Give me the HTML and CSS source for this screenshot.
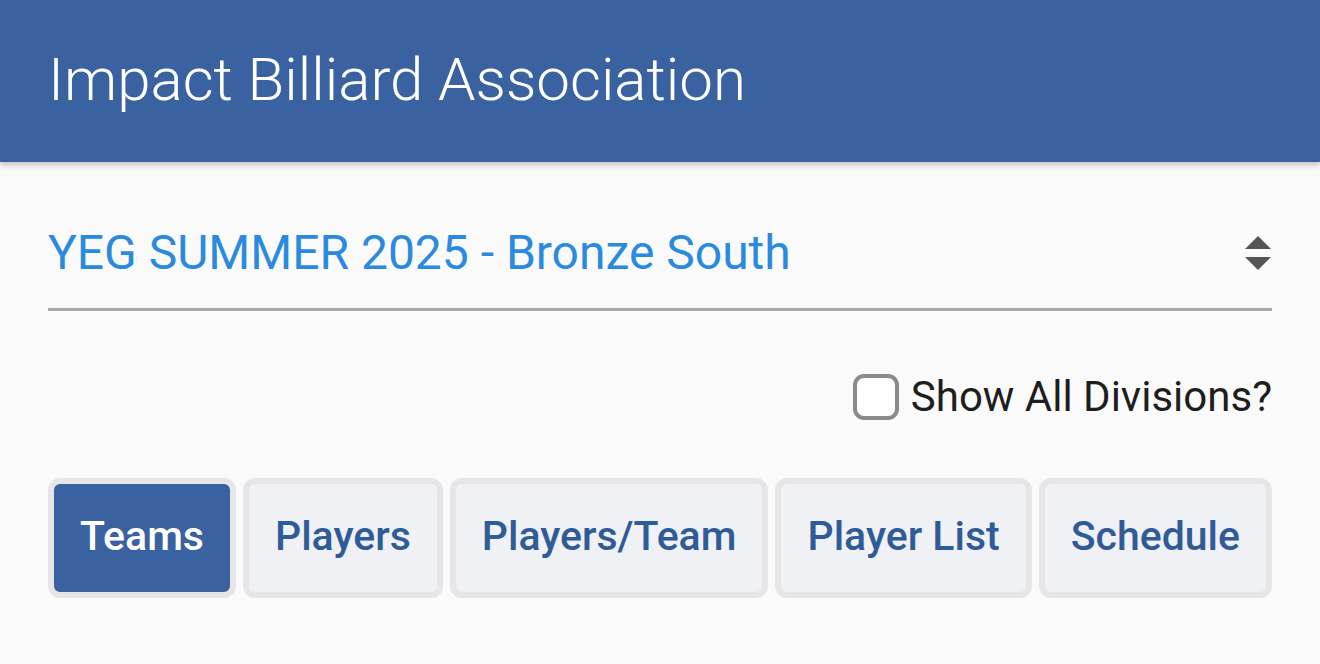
FILE: index.html
```html
<!DOCTYPE html>
<html lang="en">
<head>
<meta charset="utf-8">
<title>Impact Billiard Association</title>
<link rel="stylesheet" href="styles.css">
</head>
<body>
<header class="app-bar">
  <h1 class="app-title">Impact Billiard Association</h1>
</header>
<main class="content">
  <div class="select-field">
    <span class="select-value">YEG SUMMER 2025 - Bronze South</span>
    <svg class="select-arrows" viewBox="0 0 28 36" width="28" height="36" aria-hidden="true">
      <path d="M14 1 L27 14 L1 14 Z" fill="#555"/>
      <path d="M1 22 L27 22 L14 35 Z" fill="#555"/>
    </svg>
  </div>
  <div class="check-row">
    <label class="check-label"><span class="check-box"></span><span>Show All Divisions?</span></label>
  </div>
  <nav class="tabs">
    <button class="tab tab-active">Teams</button>
    <button class="tab">Players</button>
    <button class="tab">Players/Team</button>
    <button class="tab">Player List</button>
    <button class="tab">Schedule</button>
  </nav>
</main>
</body>
</html>
```
FILE: styles.css
```css
html, body {
  margin: 0;
  padding: 0;
  background: #fafafa;
  font-family: Roboto, "Liberation Sans", sans-serif;
}
.app-bar {
  height: 162px;
  background: #3a62a0;
  box-shadow: 0 3px 6px rgba(0,0,0,0.22);
  display: flex;
  align-items: center;
  padding: 0 48px;
  box-sizing: border-box;
  position: relative;
}
.app-title {
  margin: 0;
  color: #fff;
  font-weight: 300;
  font-size: 60px;
  letter-spacing: 0;
  padding-bottom: 4px;
}
.content {
  padding: 0 48px;
}
.select-field {
  margin-top: 62px;
  height: 87px;
  border-bottom: 3px solid #a9a9a9;
  display: flex;
  align-items: center;
  justify-content: space-between;
  box-sizing: border-box;
  padding-bottom: 27px;
}
.select-value {
  color: #2a8ae0;
  font-size: 48px;
  font-weight: 400;
}
.select-arrows {
  display: block;
  margin-right: 0;
}
.check-row {
  display: flex;
  justify-content: flex-end;
  margin-top: 61px;
}
.check-label {
  display: flex;
  align-items: center;
  gap: 12px;
  color: #1e1e1e;
  font-size: 42px;
}
.check-box {
  width: 38px;
  height: 38px;
  border: 4px solid #8a8a8a;
  border-radius: 11px;
  background: #fff;
}
.tabs {
  display: flex;
  gap: 7px;
  margin-top: 57px;
}
.tab {
  flex: 1 1 auto;
  height: 120px;
  border: 6px solid #e6e6e8;
  border-radius: 12px;
  background: #f0f1f5;
  color: #2f5b97;
  font-family: Roboto, "Liberation Sans", sans-serif;
  font-size: 41px;
  font-weight: 500;
  padding: 0 24px 4px;
  box-sizing: border-box;
}
.tab-active {
  background: #3a62a0;
  color: #fff;
  border-color: #e6e6e8;
}
```
